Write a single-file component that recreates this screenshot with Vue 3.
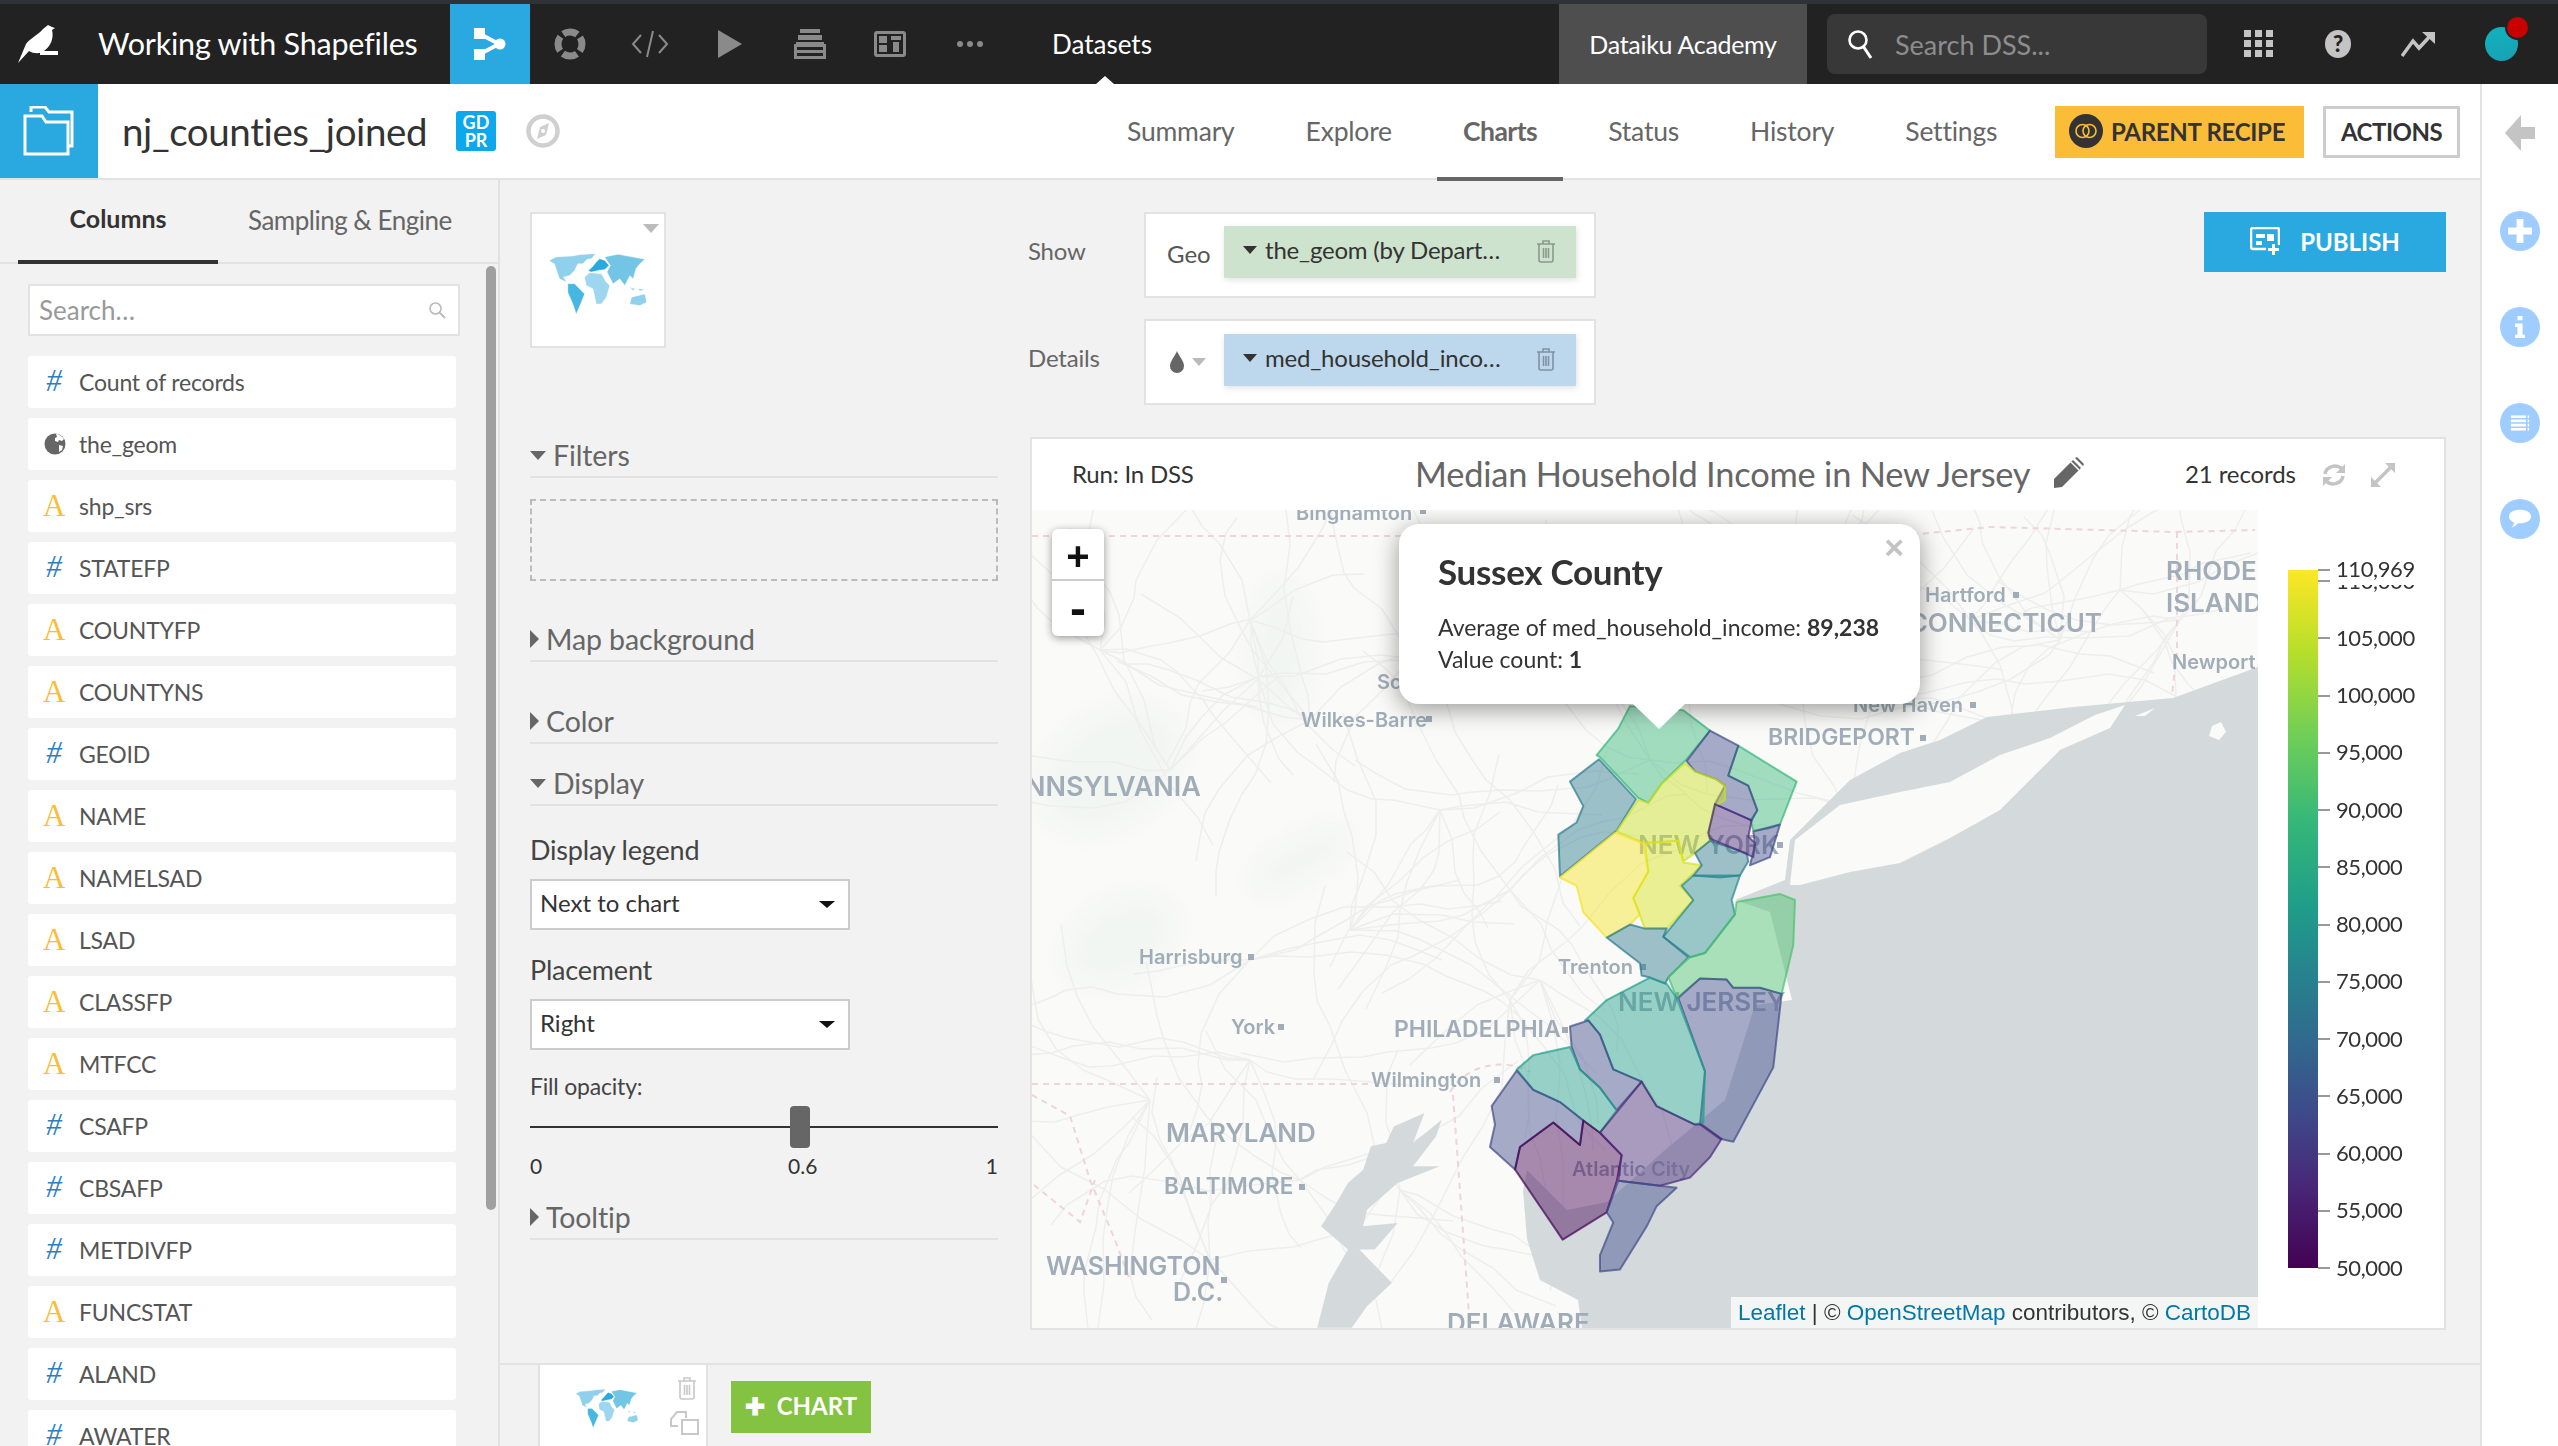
<template>
  <div class="app">
    <svg width="0" height="0" class="defs">
      <symbol id="world" viewBox="0 0 290 185">
        <g stroke="#fff" stroke-width="1">
          <path fill="#8fd0ec" d="M0 25 20 15 70 12 90 8 138 5 125 20 112 22 100 35 85 35 75 55 60 70 42 75 52 90 30 80 15 35 5 30Z" />
          <path fill="#73c5e6" d="M165 15 205 7 285 22 270 35 258 50 250 80 240 70 225 100 210 80 190 95 172 60 182 40Z" />
          <path fill="#29a9df" d="M116 56 128 45 140 30 150 20 165 25 178 40 165 52 145 55 125 60Z" />
          <path fill="#9ed6ef" d="M105 75 120 62 155 65 170 90 180 100 170 135 155 155 140 155 130 110 110 100Z" />
          <path fill="#45b7e0" d="M55 95 75 95 105 125 95 150 80 185 72 160 55 120Z" />
          <path fill="#8fd0ec" d="M245 135 285 125 290 150 270 160 240 155ZM240 105 255 110 250 115ZM265 110 285 112 270 116Z" />
        </g>
      </symbol>
      <symbol id="trash" viewBox="0 0 20 24">
        <path fill="none" stroke="currentColor" stroke-width="1.600" d="M1 5h18M7 5V2h6v3M3 5v16a2 2 0 0 0 2 2h10a2 2 0 0 0 2-2V5M7.500 9v10M10 9v10M12.500 9v10" />
      </symbol>
    </svg>

    <header class="topbar">
      <svg class="logo" viewBox="0 0 42 40">
        <path fill="#fff" d="M0 39 8 20C11 15 20 11 25 5L30 1 34 3 37 4 34 6C36 14 33 22 26 27 22 30 16 30 11 27Z" />
        <path fill="#fff" d="M22 27h18v4H22z" />
      </svg>
      <span class="project">Working with Shapefiles</span>
      <div class="flow-tab">
        <svg width="32" height="32" viewBox="0 0 32 32">
          <path fill="none" stroke="#fff" stroke-width="4" d="M8 7 25 16 8 25" />
          <path fill="#fff" d="M0 0h11v11H0zM0 21h11v11H0z" /><circle cx="26" cy="16" r="5.500" fill="#fff" />
        </svg>
      </div>
      <div class="nav-icon">
        <svg width="32" height="32" viewBox="0 0 32 32">
          <circle cx="16" cy="16" r="12" fill="none" stroke="#8a8a8a" stroke-width="7" stroke-dasharray="15 3.850" stroke-dashoffset="7.500" />
        </svg>
      </div>
      <div class="nav-icon">
        <svg width="38" height="30" viewBox="0 0 38 30">
          <path fill="none" stroke="#8a8a8a" stroke-width="2" d="M10 6 2 15l8 9M28 6l8 9-8 9M22 2 16 28" />
        </svg>
      </div>
      <div class="nav-icon">
        <svg width="24" height="28" viewBox="0 0 24 28"><path fill="#8a8a8a" d="M0 0 24 14 0 28z" /></svg>
      </div>
      <div class="nav-icon">
        <svg width="32" height="30" viewBox="0 0 32 30">
          <path fill="#8a8a8a" d="M6 0h20v4H6zM4 6h24v5H4zM2 13h28v2h2v15H0V15h2zM3 18v3h26v-3zM3 24v3h26v-3z" />
        </svg>
      </div>
      <div class="nav-icon">
        <svg width="32" height="26" viewBox="0 0 32 26">
          <rect width="32" height="26" rx="3" fill="#8a8a8a" /><rect x="3" y="3" width="26" height="20" fill="#222" />
          <path fill="#8a8a8a" d="M5 5h8v7H5zM5 14h8v7H5zM17 5h10v4H17zM19 11h6v10h-6z" />
        </svg>
      </div>
      <div class="nav-dots"><i></i><i></i><i></i></div>
      <span class="datasets">Datasets<b class="caret-up"></b></span>

      <div class="academy">Dataiku Academy</div>
      <div class="search-dss">
        <svg width="26" height="30" viewBox="0 0 26 30">
          <circle cx="11" cy="11" r="8.500" fill="none" stroke="#fff" stroke-width="2.600" /><path stroke="#fff" stroke-width="3" d="M16 17 24 29" />
        </svg>
        <span>Search DSS...</span>
      </div>
      <svg class="tb-grid" width="30" height="28" viewBox="0 0 30 28">
        <path fill="#c4c4c4" d="M0 0h7v7H0zM11 0h7v7h-7zM22 0h7v7h-7zM0 10h7v7H0zM11 10h7v7h-7zM22 10h7v7h-7zM0 20h7v7H0zM11 20h7v7h-7zM22 20h7v7h-7z" />
      </svg>
      <div class="tb-help">?</div>
      <svg class="tb-trend" width="34" height="26" viewBox="0 0 34 26">
        <path fill="none" stroke="#c4c4c4" stroke-width="3.500" d="M1 25 12 10l6 7L31 3" /><path fill="#c4c4c4" d="M21 1h13v12z" />
      </svg>
      <div class="tb-avatar"><i></i></div>
    </header>

    <div class="page">
      <div class="main">
        <div class="subbar">
          <div class="ds-icon">
            <svg width="52" height="50" viewBox="0 0 52 50">
              <path fill="none" stroke="#fff" stroke-width="3" d="M8 6V1h14l4 5h23v34h-4" />
              <path fill="#29a9df" stroke="#fff" stroke-width="3" d="M2 10h17l4 6h22v32H2z" />
            </svg>
          </div>
          <span class="ds-name">nj_counties_joined</span>
          <div class="gdpr">GD<br />PR</div>
          <svg class="compass" width="34" height="34" viewBox="0 0 34 34">
            <circle cx="17" cy="17" r="14.500" fill="none" stroke="#cfcfcf" stroke-width="4.500" />
            <path fill="#cfcfcf" d="M23 9 20 21 11 25 14 13Z" /><circle cx="17" cy="17" r="2" fill="#fff" />
          </svg>
          <nav class="tabs">
            <a v-for="t in tabs" :key="t" :class="{ on: t === 'Charts' }">{{ t }}</a>
          </nav>
          <button class="parent-recipe">
            <span class="recipe-dot">
              <svg width="24" height="16" viewBox="0 0 24 16">
                <circle cx="8.500" cy="8" r="6.500" fill="none" stroke="#fbbd38" stroke-width="1.600" />
                <circle cx="15.500" cy="8" r="6.500" fill="none" stroke="#fbbd38" stroke-width="1.600" />
              </svg>
            </span>
            PARENT RECIPE
          </button>
          <button class="actions">ACTIONS</button>
        </div>

        <div class="body">
          <aside class="sidebar">
            <div class="side-tabs">
              <a class="on">Columns</a>
              <a>Sampling &amp; Engine</a>
            </div>
            <div class="side-scroll"></div>
            <div class="col-search">
              <span>Search…</span>
              <svg width="18" height="18" viewBox="0 0 18 18">
                <circle cx="7.500" cy="7.500" r="5.500" fill="none" stroke="#bbb" stroke-width="1.600" /><path stroke="#bbb" stroke-width="1.800" d="m11.500 11.500 5.500 5.500" />
              </svg>
            </div>
            <ul class="cols">
              <li v-for="c in columns" :key="c.name">
                <span v-if="c.type === '#'" class="ic-num">#</span>
                <span v-else-if="c.type === 'A'" class="ic-str">A</span>
                <svg v-else class="ic-geo" width="22" height="22" viewBox="0 0 22 22">
                  <circle cx="11" cy="11" r="10.500" fill="#666" />
                  <path fill="#fff" d="M12 1c3 0 6 2 8 5l-2 2-3-1-1 2-3-1V5l2-1zM15 12l4 1-1 4-3 2z" />
                </svg>
                <span>{{ c.name }}</span>
              </li>
            </ul>
          </aside>

          <div class="content">
            <div class="work">
              <section class="options">
                <div class="chart-type">
                  <b class="type-caret"></b>
                  <svg class="type-world" viewBox="0 0 290 185"><use href="#world" /></svg>
                </div>

                <div class="sec filters-sec"><i class="tri down"></i>Filters</div>
                <div class="drop"></div>
                <div class="sec mapbg-sec"><i class="tri right"></i>Map background</div>
                <div class="sec color-sec"><i class="tri right"></i>Color</div>
                <div class="sec display-sec"><i class="tri down"></i>Display</div>

                <label class="lab first">Display legend</label>
                <div class="sel">Next to chart<i></i></div>
                <label class="lab second">Placement</label>
                <div class="sel">Right<i></i></div>
                <label class="lab small">Fill opacity:</label>
                <div class="slider"><span class="thumb" :style="{ left: opacity * 100 * 0.926 + '%' }"></span></div>
                <div class="slider-vals"><span>0</span><span class="mid">0.6</span><span>1</span></div>
                <div class="sec tooltip-sec"><i class="tri right"></i>Tooltip</div>
              </section>

              <section class="chart-col">
                <div class="top-row">
                  <div class="dims">
                    <div class="dim">
                      <span class="dim-label">Show</span>
                      <div class="dim-box">
                        <span class="dim-name">Geo</span>
                        <div class="pill green">
                          <i class="pill-caret"></i>
                          <span>the_geom (by Depart…</span>
                          <svg class="pill-trash" width="20" height="24"><use href="#trash" /></svg>
                        </div>
                      </div>
                    </div>
                    <div class="dim">
                      <span class="dim-label">Details</span>
                      <div class="dim-box">
                        <span class="dim-name drop-name">
                          <svg width="14" height="22" viewBox="0 0 14 22"><path fill="#666" d="M7 0c2 5 7 10 7 15a7 7 0 0 1-14 0C0 10 5 5 7 0z" /></svg>
                          <b></b>
                        </span>
                        <div class="pill blue">
                          <i class="pill-caret"></i>
                          <span>med_household_inco…</span>
                          <svg class="pill-trash" width="20" height="24"><use href="#trash" /></svg>
                        </div>
                      </div>
                    </div>
                  </div>
                  <button class="publish">
                    <svg width="30" height="28" viewBox="0 0 30 28">
                      <path fill="none" stroke="#fff" stroke-width="2.500" stroke-linejoin="round" d="M16 22H3a2 2 0 0 1-2-2V3a2 2 0 0 1 2-2h24a2 2 0 0 1 2 2v15" />
                      <path fill="#fff" d="M6 7h9v4H6zM6 14h6v4H6zM17 7h7v7h-7zM22 17h3v4h4v3h-4v4h-3v-4h-4v-3h4z" />
                    </svg>
                    PUBLISH
                  </button>
                </div>

                <div class="panel">
                  <div class="panel-head">
                    <span class="run">Run: In DSS</span>
                    <span class="title">Median Household Income in New Jersey</span>
                    <svg class="pencil" width="32" height="32" viewBox="0 0 32 32">
                      <path fill="#666" d="M2 22 21 3l8 8-19 19-8 1zM23 1l2-1 7 7-1 2z" /><path stroke="#fff" stroke-width="1.500" d="M19 5l8 8" />
                    </svg>
                    <span class="records">21 records</span>
                    <svg class="act" width="24" height="24" viewBox="0 0 24 24">
                      <path fill="none" stroke="#c4c4c4" stroke-width="3.500" d="M3 11C4 4 14 0 20 6M21 13c-1 7-11 11-17 5" />
                      <path fill="#c4c4c4" d="M23 1v9h-9zM1 23v-9h9z" />
                    </svg>
                    <svg class="act last" width="24" height="24" viewBox="0 0 24 24">
                      <path stroke="#c4c4c4" stroke-width="3.500" d="M4 20 20 4" /><path fill="#c4c4c4" d="M14 0h10v10zM0 14v10h10z" />
                    </svg>
                  </div>
                  <div class="panel-body">
                    <div class="map">
                      <svg class="map-svg" width="1226" height="818" viewBox="1032 510 1226 818">
                        <rect x="1032" y="510" width="1226" height="818" fill="#fafaf8" />
                        <g class="forest">
                          <ellipse cx="1110" cy="770" rx="80" ry="55" transform="rotate(-35 1110 770)" />
                          <ellipse cx="1300" cy="860" rx="55" ry="22" transform="rotate(-30 1300 860)" />
                          <ellipse cx="1120" cy="940" rx="60" ry="40" transform="rotate(-30 1120 940)" />
                          <ellipse cx="1280" cy="650" rx="30" ry="70" />
                        </g>
                        <g class="roads">
                          <path v-for="(r, i) in roads" :key="i" :d="r" />
                        </g>
                        <path class="water" d="M2258 667 2173 698 2073 707 1987 717 1940 740 1900 753 1850 780 1790 840 1785 880 1735 900 1770 912 1792 1000 1755 1005 1725 1100 1665 1150 1607 1202 1567 1210 1527 1170 1523 1190 1527 1239 1540 1280 1578 1300 1582 1328 2258 1328Z" />
                        <path fill="#fafaf8" d="M1790 885 1795 840 1840 805 1900 792 1950 782 2000 755 2050 738 2095 715 2125 705 2110 728 2060 750 2030 780 2000 810 1950 838 1900 863 1850 872 1800 885Z" />
                        <path fill="#fafaf8" d="M2209 736 2212 726 2221 722 2226 732 2219 740ZM2135 716 2155 708 2145 716Z" />
                        <path class="water" transform="translate(1030 850) scale(.383 .333)" d="M950 830 1030 790 1000 880 1075 810 1060 860 1000 950 1070 950 960 1000 880 1080 870 1130 960 1120 900 1200 860 1200 945 1300 880 1370 840 1435 750 1435 780 1300 830 1200 760 1130 800 1060 830 1000 870 960 890 890 930 880Z" />
                        <g class="border">
                          <path d="M1032 536H1900L1990 527 2175 532 2255 530M2177 532V650L2172 695" />
                          <path d="M1032 1084H1370M1450 1092C1470 1060 1510 1060 1530 1072M1453 1095 1470 1328" />
                          <path d="M1032 1095 1070 1116 1090 1180 1115 1240 1130 1280M1034 1185 1080 1222 1095 1180" />
                        </g>
                        <g class="labels">
                          <text v-for="l in labels" :key="l.t" :x="l.x" :y="l.y" :font-size="l.s" :text-anchor="l.a || 'start'">{{ l.t }}</text>
                          <path d="M1420 508h6v6h-6zM1426 716h6v6h-6zM2013 592h6v6h-6zM1970 702h6v6h-6zM1920 735h6v6h-6zM1777 842h6v6h-6zM1640 964h6v6h-6zM1562 1027h6v6h-6zM1494 1077h6v6h-6zM1248 954h6v6h-6zM1278 1024h6v6h-6zM1299 1184h6v6h-6zM1221 1277h6v6h-6z" />
                        </g>
                        <g transform="translate(1400 700) scale(.3333 .4082)">
                          <path v-for="c in counties" :key="c.n" class="county" :d="c.d" :fill="c.f" :stroke="c.f" />
                        </g>
                      </svg>

                      <div class="zoom-ctl"><span class="plus">+</span><span class="minus">-</span></div>
                      <div class="popup">
                        <span class="close">×</span>
                        <h4>Sussex County</h4>
                        <p>Average of med_household_income: <b>89,238</b></p>
                        <p>Value count: <b>1</b></p>
                        <i class="tip"></i>
                      </div>
                      <div class="attrib"><a>Leaflet</a> | © <a>OpenStreetMap</a> contributors, © <a>CartoDB</a></div>
                    </div>
                    <div class="legend">
                      <div class="bar"></div>
                      <div v-for="t in ticks" :key="t.v" class="tick" :class="{ top: t.max }" :style="{ top: t.y + 'px' }">
                        <i></i><span>{{ t.label }}</span>
                      </div>
                    </div>
                  </div>
                </div>
              </section>
            </div>

            <footer class="bottom">
              <div class="thumb-card">
                <svg class="thumb-world" viewBox="0 0 290 185"><use href="#world" /></svg>
                <svg class="thumb-trash" width="20" height="24"><use href="#trash" /></svg>
                <svg class="thumb-copy" width="30" height="24" viewBox="0 0 30 24">
                  <path fill="none" stroke="#c8c8c8" stroke-width="2" d="M9 15H2V8l6-7h9v6M13 9h16v14H13z" />
                </svg>
              </div>
              <button class="add-chart"><span>✚</span> CHART</button>
            </footer>
          </div>
        </div>
      </div>

      <aside class="rail">
        <svg class="back" width="30" height="36" viewBox="0 0 30 36"><path fill="#c4c4c4" d="M16 0v12h14v12H16v12L0 18z" /></svg>
        <div class="rail-btns">
          <span class="rb">
            <svg width="28" height="28" viewBox="0 0 28 28"><path fill="#fff" d="M10 0h8v10h10v8H18v10h-8V18H0v-8h10z" /></svg>
          </span>
          <span class="rb">
            <svg width="12" height="26" viewBox="0 0 12 26"><path fill="#fff" d="M3 0h6v5H3zM0 9h9v13h3v4H0v-4h3v-9H0z" /></svg>
          </span>
          <span class="rb">
            <svg width="22" height="18" viewBox="0 0 22 18"><path fill="#fff" d="M0 0h18v3H0zM0 5h18v3H0zM0 10h18v3H0zM0 15h18v3H0zM20 0h2v3h-2zM20 5h2v3h-2zM20 10h2v3h-2zM20 15h2v3h-2z" /></svg>
          </span>
          <span class="rb">
            <svg width="26" height="24" viewBox="0 0 26 24"><path fill="#fff" d="M13 1c7 0 13 3 13 8s-6 8-13 8h-2c-2 2-5 4-8 5 2-2 3-4 3-6C3 15 0 12 0 9c0-5 6-8 13-8z" /></svg>
          </span>
        </div>
      </aside>
    </div>
  </div>
</template>

<script setup>
const tabs = ["Summary", "Explore", "Charts", "Status", "History", "Settings"];
const opacity = 0.6;

const names = [
  ["Count of records", "#"], ["the_geom", "geo"], ["shp_srs", "A"], ["STATEFP", "#"], ["COUNTYFP", "A"],
  ["COUNTYNS", "A"], ["GEOID", "#"], ["NAME", "A"], ["NAMELSAD", "A"], ["LSAD", "A"], ["CLASSFP", "A"],
  ["MTFCC", "A"], ["CSAFP", "#"], ["CBSAFP", "#"], ["METDIVFP", "#"], ["FUNCSTAT", "A"], ["ALAND", "#"], ["AWATER", "#"]
];
const columns = names.map(([name, type]) => ({ name, type }));

const scaleMin = 50000;
const scaleMax = 110969;
const tickY = (v) => 698 - ((v - scaleMin) / (scaleMax - scaleMin)) * 698;
const values = [110000, 105000, 100000, 95000, 90000, 85000, 80000, 75000, 70000, 65000, 60000, 55000, 50000];
const ticks = [
  ...values.map((v) => ({ v, y: tickY(v), label: v.toLocaleString("en-US") })),
  { v: scaleMax, y: 0, label: "110,969", max: true }
];

const labels = [
  { t: "Binghamton", x: 1296, y: 520, s: 20 },
  { t: "Scranton", x: 1377, y: 689, s: 20 },
  { t: "Wilkes-Barre", x: 1301, y: 727, s: 20 },
  { t: "PENNSYLVANIA", x: 1201, y: 796, s: 27, a: "end" },
  { t: "Hartford", x: 1925, y: 602, s: 20 },
  { t: "CONNECTICUT", x: 2102, y: 632, s: 26, a: "end" },
  { t: "RHODE", x: 2166, y: 580, s: 26 },
  { t: "ISLAND", x: 2166, y: 612, s: 26 },
  { t: "Newport", x: 2172, y: 669, s: 20 },
  { t: "New Haven", x: 1853, y: 712, s: 20 },
  { t: "BRIDGEPORT", x: 1768, y: 745, s: 23 },
  { t: "NEW YORK", x: 1638, y: 854, s: 26 },
  { t: "Trenton", x: 1558, y: 974, s: 20 },
  { t: "NEW JERSEY", x: 1618, y: 1011, s: 26 },
  { t: "PHILADELPHIA", x: 1394, y: 1037, s: 23 },
  { t: "Wilmington", x: 1371, y: 1087, s: 20 },
  { t: "Harrisburg", x: 1139, y: 964, s: 20 },
  { t: "York", x: 1231, y: 1034, s: 20 },
  { t: "MARYLAND", x: 1166, y: 1142, s: 26 },
  { t: "BALTIMORE", x: 1164, y: 1194, s: 22.500 },
  { t: "WASHINGTON", x: 1046, y: 1275, s: 25 },
  { t: "D.C.", x: 1173, y: 1301, s: 25 },
  { t: "DELAWARE", x: 1447, y: 1332, s: 26 },
  { t: "Atlantic City", x: 1572, y: 1176, s: 20 }
];

// faint road network: short random walks that leave from each town, seeded so the map never changes
let seed = 7;
const rnd = () => {
  seed = (seed * 16807) % 2147483647;
  return seed / 2147483647;
};
const hubs = [
  [1250, 960], [1350, 930], [1510, 1000], [1510, 890], [1310, 720], [1300, 1180], [1210, 1260], [1420, 660],
  [1970, 620], [2060, 640], [1800, 600], [1170, 770], [1100, 650], [1250, 620], [1400, 1190], [1540, 980],
  [2120, 590], [1150, 1100], [1440, 810], [1650, 760], [1250, 1060], [1700, 560], [1880, 700], [2180, 620]
];
const roads = [];
for (const [hx, hy] of hubs) {
  for (let k = 0; k < 7; k++) {
    let x = hx;
    let y = hy;
    let a = rnd() * Math.PI * 2;
    let d = `M${x} ${y}`;
    const steps = 4 + Math.floor(rnd() * 6);
    for (let s = 0; s < steps; s++) {
      a += (rnd() - 0.5) * 0.8;
      const len = 18 + rnd() * 32;
      x = Math.round(x + Math.cos(a) * len);
      y = Math.round(y + Math.sin(a) * len);
      d += ` L${x} ${y}`;
    }
    roads.push(d);
  }
}

const YEL = "#f7e225";
const counties = [
  { n: "warren", f: "#2a7b8e", d: "M510 200 597 145 708 243 650 320 480 432 475 330 530 300 550 260Z" },
  { n: "sussex", f: "#35b779", d: "M590 135 655 70 690 15 850 25 930 75 860 145 785 205 745 252 715 240 600 140Z" },
  { n: "bergen", f: "#35b779", d: "M1015 112 1190 200 1140 305 1105 315 1060 320 1052 295 1072 270 1045 210 985 185Z" },
  { n: "passaic", f: "#3e4a89", d: "M930 75 1015 112 985 185 1045 210 1072 270 1055 295 945 255 975 210 950 195 885 175 860 150Z" },
  { n: "morris", f: "#c9e020", d: "M715 245 745 252 785 205 855 155 885 175 950 195 975 210 975 245 945 260 925 325 930 345 885 375 850 395 835 345 730 350 650 322Z" },
  { n: "hunterdon", f: YEL, d: "M480 435 645 325 730 352 745 420 700 485 720 525 690 550 620 582 550 520 530 455Z" },
  { n: "somerset", f: "#d8e219", d: "M735 352 835 345 850 398 905 405 840 455 880 490 800 560 735 560 700 485 745 420Z" },
  { n: "union", f: "#2a788e", d: "M880 430 905 405 885 375 930 345 1040 375 1045 395 1020 430 960 435Z" },
  { n: "essex", f: "#482878", d: "M945 255 1055 295 1045 335 1065 350 1060 385 1020 370 930 340 925 325Z" },
  { n: "hudson", f: "#3e4a89", d: "M1060 322 1140 305 1110 385 1050 405 1065 355Z" },
  { n: "middlesex", f: "#238a8d", d: "M845 455 880 430 1020 430 995 490 1005 525 915 620 870 630 790 580 880 490Z" },
  { n: "mercer", f: "#2a788e", d: "M620 582 690 550 735 560 800 560 790 580 865 630 805 680 795 695 750 680 725 675 720 645Z" },
  { n: "monmouth", f: "#4ac16d", d: "M805 678 870 630 915 620 1005 525 1010 495 1140 475 1185 490 1180 600 1145 720 1080 705 1000 705 980 685 900 682 830 730Z" },
  { n: "ocean", f: "#3e4a89", d: "M835 730 900 682 980 685 1000 705 1080 705 1145 720 1120 900 1000 1082 960 1075 900 1040 915 910Z" },
  { n: "burlington", f: "#1f9e89", d: "M555 785 620 735 750 680 800 695 830 730 915 910 910 1035 885 1040 770 995 725 935 640 905 600 820 565 785Z" },
  { n: "camden", f: "#3e4a89", d: "M510 800 565 785 600 820 640 905 725 935 650 1005 600 950 540 905 515 850Z" },
  { n: "gloucester", f: "#1f9e89", d: "M350 905 400 870 510 850 540 905 600 950 650 1005 600 1060 550 1030 480 985 400 955Z" },
  { n: "salem", f: "#3e4a89", d: "M350 908 400 955 480 985 550 1030 540 1090 460 1035 360 1095 345 1150 270 1095 285 1040 275 995Z" },
  { n: "cumberland", f: "#440154", d: "M345 1150 360 1095 460 1035 540 1090 550 1030 600 1060 665 1115 650 1180 620 1255 488 1322Z" },
  { n: "atlantic", f: "#482878", d: "M600 1060 725 935 770 995 885 1040 905 1040 965 1075 930 1120 870 1170 780 1190 655 1178 665 1115Z" },
  { n: "capemay", f: "#3e4a89", d: "M655 1178 780 1190 830 1195 770 1240 740 1290 660 1395 600 1400 600 1360 640 1280 620 1255Z" }
];
</script>

<style>
body {
  background: #f2f2f2;
}
</style>

<style scoped>
.app {
  width: 2558px;
  height: 1446px;
  overflow: hidden;
  font-family: Lato, "Noto Sans", sans-serif;
  color: #333;
  background: #f2f2f2;
}
.defs {
  position: absolute;
}
button {
  font-family: inherit;
  border: 0;
  cursor: pointer;
}

.topbar {
  height: 80px;
  border-top: 4px solid #2f3338;
  background: #222;
  display: flex;
  align-items: center;
  color: #fff;
}
.logo {
  width: 42px;
  height: 40px;
  margin-left: 18px;
}
.project {
  margin-left: 38px;
  width: 352px;
  font-size: 30.500px;
  letter-spacing: -0.2px;
  padding-bottom: 2px;
}
.flow-tab {
  width: 80px;
  height: 80px;
  background: #29a9df;
  display: flex;
  align-items: center;
  justify-content: center;
}
.nav-icon {
  width: 80px;
  display: flex;
  justify-content: center;
}
.nav-dots {
  width: 80px;
  display: flex;
  justify-content: center;
  gap: 4px;
}
.nav-dots i {
  width: 6px;
  height: 6px;
  border-radius: 50%;
  background: #8a8a8a;
}
.datasets {
  position: relative;
  margin-left: 42px;
  font-size: 26px;
  width: 100px;
  white-space: nowrap;
}
.caret-up {
  position: absolute;
  left: 44px;
  top: 48px;
  border: 9px solid transparent;
  border-top: 0;
  border-bottom: 8px solid #fff;
}
.academy {
  margin-left: 407px;
  width: 248px;
  height: 80px;
  background: #4e4e4e;
  display: flex;
  align-items: center;
  justify-content: center;
  font-size: 25px;
  letter-spacing: -0.3px;
}
.search-dss {
  margin-left: 20px;
  width: 380px;
  height: 60px;
  box-sizing: border-box;
  padding-left: 20px;
  background: #383838;
  border-radius: 8px;
  display: flex;
  align-items: center;
  gap: 22px;
  font-size: 27px;
  color: #8d8d8d;
}
.tb-grid {
  margin-left: 37px;
}
.tb-help {
  margin-left: 51px;
  width: 26px;
  height: 28px;
  border-radius: 50%;
  background: #c4c4c4;
  color: #222;
  font-weight: 900;
  font-size: 22px;
  line-height: 28px;
  text-align: center;
}
.tb-trend {
  margin-left: 50px;
}
.tb-avatar {
  position: relative;
  margin-left: 50px;
  width: 33px;
  height: 34px;
  border-radius: 50%;
  background: linear-gradient(160deg, #11b3bd, #1a9fb5);
}
.tb-avatar i {
  position: absolute;
  left: 22px;
  top: -10px;
  width: 21px;
  height: 21px;
  border-radius: 50%;
  background: #c80000;
  box-shadow: 0 0 0 2px #222;
}

.page {
  display: flex;
  height: 1362px;
}
.main {
  width: 2480px;
  display: flex;
  flex-direction: column;
}
.subbar {
  height: 94px;
  border-bottom: 2px solid #e2e2e2;
  background: #fff;
  display: flex;
  align-items: center;
  position: relative;
}
.ds-icon {
  width: 98px;
  height: 94px;
  background: #29a9df;
  display: flex;
  align-items: center;
  justify-content: center;
}
.ds-name {
  margin-left: 24px;
  width: 334px;
  font-size: 38.500px;
  color: #333;
  letter-spacing: -0.4px;
}
.gdpr {
  width: 40px;
  height: 40px;
  border-radius: 3px;
  background: #0ba8ee;
  color: #fff;
  font-weight: 700;
  font-size: 18px;
  line-height: 18px;
  text-align: center;
  padding-top: 2px;
  box-sizing: border-box;
}
.compass {
  margin-left: 30px;
}
.tabs {
  position: absolute;
  left: 1127px;
  top: 0;
  height: 96px;
  box-sizing: border-box;
  padding-bottom: 3px;
  display: flex;
  align-items: center;
  gap: 71px;
  font-size: 26.500px;
  color: #666;
}
.tabs a {
  position: relative;
  letter-spacing: -0.2px;
}
.tabs a.on {
  font-weight: 700;
  letter-spacing: -0.5px;
}
.tabs a.on::after {
  content: "";
  position: absolute;
  left: -26px;
  right: -26px;
  bottom: -34px;
  height: 4px;
  background: #666;
}
.parent-recipe {
  position: absolute;
  left: 2055px;
  top: 22px;
  width: 249px;
  height: 52px;
  background: #fbbd38;
  color: #333;
  font-weight: 700;
  font-size: 24px;
  letter-spacing: -0.3px;
  display: flex;
  align-items: center;
  padding: 0 0 2px 14px;
  gap: 8px;
}
.recipe-dot {
  width: 34px;
  height: 34px;
  border-radius: 50%;
  background: #333;
  display: flex;
  align-items: center;
  justify-content: center;
}
.actions {
  position: absolute;
  left: 2323px;
  top: 22px;
  width: 137px;
  height: 52px;
  background: #fff;
  border: 3px solid #ccc;
  color: #333;
  font-weight: 700;
  font-size: 24px;
  letter-spacing: -0.5px;
  padding: 0 0 2px;
}

.body {
  flex: 1;
  display: flex;
  min-height: 0;
}
.sidebar {
  width: 498px;
  border-right: 2px solid #e2e2e2;
  position: relative;
  overflow: hidden;
}
.side-tabs {
  height: 84px;
  border-bottom: 2px solid #e2e2e2;
  box-sizing: border-box;
  display: flex;
  padding-left: 18px;
  font-size: 26px;
  color: #666;
}
.side-tabs a {
  line-height: 80px;
  white-space: nowrap;
}
.side-tabs a.on {
  width: 200px;
  height: 84px;
  box-sizing: border-box;
  border-bottom: 4px solid #333;
  text-align: center;
  color: #333;
  font-weight: 700;
  font-size: 25px;
  line-height: 76px;
}
.side-tabs a:last-child {
  margin-left: 30px;
  letter-spacing: -0.5px;
}
.side-scroll {
  position: absolute;
  left: 486px;
  top: 86px;
  width: 10px;
  height: 944px;
  border-radius: 5px;
  background: #a0a0a0;
}
.col-search {
  margin: 20px 0 0 28px;
  width: 432px;
  height: 52px;
  box-sizing: border-box;
  border: 2px solid #e2e2e2;
  background: #fff;
  display: flex;
  align-items: center;
  justify-content: space-between;
  padding: 0 12px 0 9px;
  font-size: 26px;
  color: #999;
}
.cols {
  list-style: none;
  margin: 20px 0 0 28px;
  padding: 0;
  width: 428px;
}
.cols li {
  height: 52px;
  margin-bottom: 10px;
  background: #fff;
  border-radius: 3px;
  display: flex;
  align-items: center;
  font-size: 23px;
  color: #555;
  letter-spacing: -0.2px;
  position: relative;
  padding-left: 51px;
}
.ic-num,
.ic-str,
.ic-geo {
  position: absolute;
  left: 14px;
  width: 24px;
  text-align: center;
}
.ic-num {
  font-family: "Liberation Serif", serif;
  font-style: italic;
  font-size: 31px;
  color: #2f7fc0;
  padding-bottom: 3px;
}
.ic-str {
  font-family: "Liberation Serif", serif;
  font-size: 31px;
  color: #fbbd38;
}
.ic-geo {
  width: 22px;
  left: 16px;
}

.content {
  flex: 1;
  display: flex;
  flex-direction: column;
  min-width: 0;
}
.work {
  flex: 1;
  display: flex;
  min-height: 0;
}
.options {
  width: 468px;
  margin-left: 30px;
}
.chart-type {
  margin-top: 32px;
  width: 136px;
  height: 136px;
  box-sizing: border-box;
  border: 2px solid #e2e2e2;
  background: #fff;
  position: relative;
}
.type-caret {
  position: absolute;
  right: 5px;
  top: 10px;
  border: 8px solid transparent;
  border-bottom: 0;
  border-top: 9px solid #bbb;
}
.type-world {
  position: absolute;
  left: 14px;
  top: 38px;
  width: 104px;
  height: 62px;
}
.sec {
  height: 41px;
  border-bottom: 2px solid #e2e2e2;
  box-sizing: border-box;
  display: flex;
  align-items: center;
  font-size: 28.500px;
  color: #666;
  letter-spacing: -0.1px;
  padding-bottom: 3px;
}
.tri {
  display: block;
  flex: none;
  margin-right: 7px;
}
.tri.down {
  border: 8.500px solid transparent;
  border-bottom: 0;
  border-top: 9px solid #666;
}
.tri.right {
  border: 9px solid transparent;
  border-right: 0;
  border-left: 9px solid #666;
}
.filters-sec {
  margin-top: 89px;
}
.drop {
  margin-top: 21px;
  height: 82px;
  box-sizing: border-box;
  border: 2px dashed #bbb;
}
.mapbg-sec {
  margin-top: 40px;
}
.color-sec {
  margin-top: 41px;
}
.display-sec {
  margin-top: 21px;
}
.lab {
  display: block;
  height: 30px;
  line-height: 25px;
  font-size: 27px;
  color: #444;
  letter-spacing: -0.2px;
}
.lab.first {
  margin-top: 31px;
}
.lab.second {
  margin-top: 27px;
}
.lab.small {
  margin-top: 21px;
  font-size: 23px;
  line-height: 30px;
}
.sel {
  margin-top: 12px;
  width: 320px;
  height: 51px;
  box-sizing: border-box;
  border: 2px solid #ccc;
  background: #fff;
  padding: 0 13px 5px 8px;
  display: flex;
  align-items: center;
  justify-content: space-between;
  font-size: 24px;
  color: #333;
}
.sel i {
  border: 8px solid transparent;
  border-bottom: 0;
  border-top: 7px solid #111;
  margin-top: 5px;
}
.slider {
  margin-top: 5px;
  height: 42px;
  position: relative;
}
.slider::before {
  content: "";
  position: absolute;
  left: 0;
  right: 0;
  top: 20px;
  height: 2px;
  background: #333;
}
.thumb {
  position: absolute;
  top: 0;
  width: 20px;
  height: 42px;
  border-radius: 4px;
  background: #666;
}
.slider-vals {
  margin-top: 6px;
  display: flex;
  justify-content: space-between;
  font-size: 21px;
  line-height: 24px;
  position: relative;
  color: #333;
}
.slider-vals .mid {
  position: absolute;
  left: 258px;
}
.tooltip-sec {
  margin-top: 21px;
}

.chart-col {
  margin-left: 32px;
  width: 1416px;
}
.top-row {
  margin-top: 32px;
  display: flex;
  justify-content: space-between;
  align-items: flex-start;
}
.dims {
  display: flex;
  flex-direction: column;
  gap: 21px;
}
.dim {
  display: flex;
  align-items: center;
}
.dim-label {
  width: 114px;
  font-size: 24px;
  color: #666;
  letter-spacing: -0.2px;
  padding-bottom: 10px;
  margin-left: -2px;
  margin-right: 2px;
}
.dim-box {
  width: 452px;
  height: 86px;
  box-sizing: border-box;
  border: 2px solid #e2e2e2;
  background: #fff;
  display: flex;
  align-items: center;
  padding-right: 18px;
}
.dim-name {
  flex: 1;
  padding: 0 0 3px 21px;
  font-size: 24px;
  color: #555;
}
.drop-name {
  display: flex;
  align-items: center;
  gap: 8px;
  padding: 0 0 0 24px;
}
.drop-name b {
  border: 7px solid transparent;
  border-bottom: 0;
  border-top: 8px solid #bbb;
}
.pill {
  width: 352px;
  height: 52px;
  display: flex;
  align-items: center;
  box-sizing: border-box;
  padding: 0 0 5px 19px;
  font-size: 24px;
  color: #333;
  letter-spacing: -0.2px;
  box-shadow: 1px 2px 6px rgba(0, 0, 0, 0.12);
  position: relative;
  white-space: nowrap;
  margin-top: -4px;
}
.pill.green {
  background: #cde3cd;
  margin-top: -6px;
}
.pill.blue {
  background: #bdd7ec;
}
.pill-caret {
  border: 7px solid transparent;
  border-bottom: 0;
  border-top: 8px solid #333;
  margin-right: 8px;
}
.pill-trash {
  position: absolute;
  right: 20px;
  top: 13px;
}
.green .pill-trash {
  color: #8a9a8c;
}
.blue .pill-trash {
  color: #7f93a4;
}
.publish {
  width: 242px;
  height: 60px;
  background: #29a9df;
  color: #fff;
  font-weight: 700;
  font-size: 24px;
  display: flex;
  align-items: center;
  justify-content: center;
  gap: 20px;
  padding: 0 0 2px;
}
.panel {
  margin-top: 32px;
  width: 1416px;
  height: 893px;
  box-sizing: border-box;
  border: 2px solid #e2e2e2;
  background: #fff;
  display: flex;
  flex-direction: column;
}
.panel-head {
  height: 71px;
  position: relative;
  display: flex;
  align-items: center;
}
.run {
  margin-left: 40px;
  font-size: 24px;
  letter-spacing: -0.2px;
  color: #333;
  padding-bottom: 2px;
}
.title {
  position: absolute;
  left: 383px;
  font-size: 34.400px;
  color: #666;
  letter-spacing: -0.2px;
  white-space: nowrap;
  padding-bottom: 2px;
}
.pencil {
  position: absolute;
  left: 1020px;
  top: 18px;
}
.records {
  position: absolute;
  left: 1153px;
  font-size: 24px;
  letter-spacing: -0.1px;
  color: #333;
  padding-bottom: 2px;
}
.act {
  position: absolute;
  left: 1290px;
  top: 24px;
}
.act.last {
  left: 1339px;
}
.panel-body {
  flex: 1;
  display: flex;
  min-height: 0;
}
.map {
  width: 1226px;
  height: 818px;
  position: relative;
  overflow: hidden;
}
.map-svg {
  display: block;
}
.water {
  fill: #d4dadc;
}
.forest {
  fill: #f2f6f2;
  filter: blur(10px);
}
.roads {
  filter: blur(0.5px);
}
.roads path {
  fill: none;
  stroke: #eeeeee;
  stroke-width: 1.500;
  stroke-linejoin: round;
}
.border path {
  fill: none;
  stroke: #edd5da;
  stroke-width: 2;
  stroke-dasharray: 6 5;
}
.labels {
  font-family: Inter, Lato, sans-serif;
  font-weight: 600;
  fill: #a0adb8;
  filter: blur(0.4px);
}
.county {
  fill-opacity: 0.45;
  stroke-width: 2;
  stroke-linejoin: round;
  vector-effect: non-scaling-stroke;
  stroke-opacity: 0.7;
}
.zoom-ctl {
  position: absolute;
  left: 20px;
  top: 19px;
  width: 52px;
  height: 107px;
  border-radius: 6px;
  background: #fff;
  box-shadow: 0 2px 8px rgba(0, 0, 0, 0.4);
  display: flex;
  flex-direction: column;
}
.zoom-ctl span {
  flex: 1;
  display: flex;
  align-items: center;
  justify-content: center;
  font-family: "Liberation Sans", sans-serif;
  font-weight: 700;
  font-size: 36px;
  color: #111;
}
.zoom-ctl .plus {
  border-bottom: 2px solid #ccc;
  font-size: 40px;
  padding-top: 4px;
}
.zoom-ctl .minus {
  font-size: 48px;
}
.popup {
  position: absolute;
  left: 367px;
  top: 14px;
  width: 521px;
  height: 180px;
  box-sizing: border-box;
  padding: 27px 39px;
  border-radius: 20px;
  background: #fff;
  box-shadow: 0 5px 25px rgba(0, 0, 0, 0.4);
  color: #333;
}
.popup h4 {
  margin: 0 0 20px;
  font-size: 35px;
  line-height: 40px;
  font-weight: 700;
  letter-spacing: -0.3px;
}
.popup p {
  margin: 0;
  font-size: 23px;
  line-height: 32px;
  white-space: nowrap;
}
.close {
  position: absolute;
  right: 16px;
  top: 11px;
  font-family: "Liberation Sans", sans-serif;
  font-size: 34px;
  line-height: 24px;
  font-weight: 700;
  color: #c3c3c3;
}
.tip {
  position: absolute;
  left: 234px;
  top: 180px;
  border: 26px solid transparent;
  border-bottom: 0;
  border-top: 25px solid #fff;
}
.attrib {
  position: absolute;
  right: 0;
  bottom: 0;
  height: 31px;
  line-height: 31px;
  padding: 0 7px;
  background: rgba(255, 255, 255, 0.75);
  font-family: "Liberation Sans", sans-serif;
  font-size: 22.500px;
  color: #333;
  white-space: nowrap;
}
.attrib a {
  color: #0078a8;
}
.legend {
  flex: 1;
  position: relative;
}
.bar {
  position: absolute;
  left: 30px;
  top: 60px;
  width: 30px;
  height: 698px;
  background: linear-gradient(to bottom, #fde725, #b5de2b 12%, #6ece58 24%, #35b779 36%, #1f9e89 48%, #26828e 58%, #31688e 68%, #3e4989 78%, #482878 88%, #440154);
}
.tick {
  position: absolute;
  left: 60px;
  margin-top: 60px;
  display: flex;
  align-items: center;
  gap: 6px;
  height: 0;
  font-size: 22px;
  color: #333;
  letter-spacing: -0.4px;
}
.tick i {
  width: 12px;
  height: 2px;
  background: #999;
}
.tick span {
  padding-bottom: 2px;
}
.tick.top span {
  background: #fff;
  line-height: 28px;
}

.bottom {
  height: 83px;
  border-top: 2px solid #e2e2e2;
  box-sizing: border-box;
  display: flex;
  align-items: flex-start;
}
.thumb-card {
  margin-left: 38px;
  width: 170px;
  height: 81px;
  box-sizing: border-box;
  border-left: 2px solid #e2e2e2;
  border-right: 2px solid #e2e2e2;
  background: #fff;
  position: relative;
}
.thumb-world {
  position: absolute;
  left: 36px;
  top: 23px;
  width: 62px;
  height: 40px;
}
.thumb-trash {
  position: absolute;
  left: 137px;
  top: 11px;
  color: #c8c8c8;
}
.thumb-copy {
  position: absolute;
  left: 129px;
  top: 46px;
}
.add-chart {
  margin: 16px 0 0 23px;
  width: 140px;
  height: 52px;
  background: #84c341;
  color: #fff;
  font-weight: 700;
  font-size: 24px;
  padding: 0 0 2px;
}
.add-chart span {
  margin-right: 6px;
}

.rail {
  width: 76px;
  border-left: 2px solid #e2e2e2;
  background: #fff;
  display: flex;
  flex-direction: column;
  align-items: center;
}
.back {
  margin-top: 31px;
}
.rail-btns {
  margin-top: 60px;
  display: flex;
  flex-direction: column;
  gap: 56px;
}
.rb {
  width: 40px;
  height: 40px;
  border-radius: 50%;
  background: #a0cdff;
  display: flex;
  align-items: center;
  justify-content: center;
}
.rb svg {
  transform: scale(0.85);
}
</style>
